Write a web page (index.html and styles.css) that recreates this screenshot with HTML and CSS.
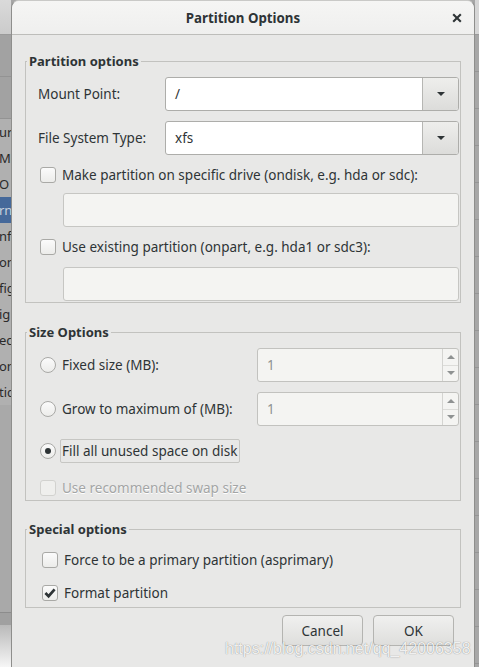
FILE: index.html
```html
<!DOCTYPE html>
<html lang="en">
<head>
<meta charset="utf-8">
<title>Partition Options</title>
<link rel="stylesheet" href="styles.css">
</head>
<body>
<div class="screen">
  <aside class="backdrop-left">
    <div class="bl-head"></div>
    <div class="bl-toolbar"></div>
    <div class="bl-toolbar"></div>
    <ul class="bl-list">
      <li>ur</li><li>Me</li><li>O</li><li class="sel">rn</li><li>nfi</li><li>on</li><li>fig</li><li>ig</li><li>ec</li><li>on</li><li>tic</li>
    </ul>
    <div class="bl-fill"></div>
    <div class="bl-band"></div>
    <div class="bl-bottom"></div>
  </aside>

  <div class="dialog">
    <header class="titlebar">
      <span></span>
      <span class="title">Partition Options</span>
      <span class="close"><svg width="10" height="10" viewBox="0 0 10 10"><path d="M1.2 1.2L8.8 8.8M8.8 1.2L1.2 8.8" stroke="#2e3436" stroke-width="2.1" stroke-linecap="butt"/></svg></span>
    </header>

    <main class="content">
      <fieldset class="frame frame-part">
        <legend>Partition options</legend>
        <div class="frame-body">
          <div class="form-row">
            <span class="label">Mount Point:</span>
            <div class="combo"><span class="combo-value">/</span><span class="combo-button"><svg width="8" height="4" viewBox="0 0 8 4"><path d="M0 0H8L4 4Z" fill="#2e3436"/></svg></span></div>
          </div>
          <div class="form-row gap10">
            <span class="label">File System Type:</span>
            <div class="combo"><span class="combo-value">xfs</span><span class="combo-button"><svg width="8" height="4" viewBox="0 0 8 4"><path d="M0 0H8L4 4Z" fill="#2e3436"/></svg></span></div>
          </div>
          <div class="check-row gap12"><span class="check"></span><span>Make partition on specific drive (ondisk, e.g. hda or sdc):</span></div>
          <div class="entry gap10"></div>
          <div class="check-row gap12"><span class="check"></span><span>Use existing partition (onpart, e.g. hda1 or sdc3):</span></div>
          <div class="entry gap12"></div>
        </div>
      </fieldset>

      <fieldset class="frame frame-size">
        <legend>Size Options</legend>
        <div class="frame-body size-body">
          <div class="size-row">
            <div class="radio-label"><span class="radio"></span><span>Fixed size (MB):</span></div>
            <div class="spin"><span class="spin-value">1</span><span class="spin-buttons"><span class="spin-btn"><svg width="8" height="4" viewBox="0 0 8 4"><path d="M0 4H8L4 0Z" fill="#8f9292"/></svg></span><span class="spin-btn"><svg width="8" height="4" viewBox="0 0 8 4"><path d="M0 0H8L4 4Z" fill="#8f9292"/></svg></span></span></div>
          </div>
          <div class="size-row gap10">
            <div class="radio-label"><span class="radio"></span><span>Grow to maximum of (MB):</span></div>
            <div class="spin"><span class="spin-value">1</span><span class="spin-buttons"><span class="spin-btn"><svg width="8" height="4" viewBox="0 0 8 4"><path d="M0 4H8L4 0Z" fill="#8f9292"/></svg></span><span class="spin-btn"><svg width="8" height="4" viewBox="0 0 8 4"><path d="M0 0H8L4 4Z" fill="#8f9292"/></svg></span></span></div>
          </div>
          <div class="fill-row gap13">
            <span class="radio checked"></span><span class="focus-label">Fill all unused space on disk</span>
          </div>
          <div class="check-row disabled gap17"><span class="check"></span><span>Use recommended swap size</span></div>
        </div>
      </fieldset>

      <fieldset class="frame frame-special">
        <legend>Special options</legend>
        <div class="frame-body special-body">
          <div class="check-row special"><span class="check"></span><span>Force to be a primary partition (asprimary)</span></div>
          <div class="check-row special gap17"><span class="check checked"><svg width="14" height="14" viewBox="0 0 14 14"><path d="M2.4 7L5.6 10.2L11.6 3.4" fill="none" stroke="#2e3436" stroke-width="2.7"/></svg></span><span>Format partition</span></div>
        </div>
      </fieldset>

      <div class="actions">
        <button class="btn">Cancel</button>
        <button class="btn">OK</button>
      </div>
    </main>

    <div class="watermark">https://blog.csdn.net/qq_42006358</div>
  </div>

  <aside class="backdrop-right">
    <div class="br-head"></div>
    <div class="br-body"></div>
  </aside>
</div>
</body>
</html>
```

FILE: styles.css
```css
* { box-sizing: border-box; }

html, body {
  margin: 0;
  padding: 0;
}

body {
  width: 479px;
  height: 667px;
  overflow: hidden;
  font-family: "Noto Sans", "DejaVu Sans", sans-serif;
  font-size: 13.5px;
  line-height: 18px;
  color: #2e3436;
  background: #a6a6a6;
}

.screen {
  display: flex;
  height: 667px;
}

/* ---------- dimmed window behind the dialog ---------- */
.backdrop-left {
  width: 11px;
  flex: none;
  display: flex;
  flex-direction: column;
  overflow: hidden;
  background: #afafaf;
}
.bl-head {
  height: 35px;
  background: linear-gradient(#dadada, #cbcbcb);
  border-bottom: 1px solid #9a9a9a;
}
.bl-toolbar {
  height: 42px;
  background: #a2a2a2;
  border-bottom: 1px solid #939393;
}
.bl-list {
  list-style: none;
  margin: 0;
  padding: 0;
  background: #b0b0b0;
}
.bl-list li {
  height: 26px;
  line-height: 26px;
  font-size: 13px;
  margin-left: -1px;
  color: #2a2a2a;
  white-space: nowrap;
}
.bl-list li.sel {
  background: #46699a;
  color: #c9d2de;
}
.bl-fill {
  flex: 1;
  background: #a9a9a9;
}
.bl-band {
  height: 13px;
  background: #a0a0a0;
  border-top: 1px solid #8c8c8c;
}
.bl-bottom {
  height: 42px;
  background: linear-gradient(#b9b9b9, #f6f6f6);
}

.backdrop-right {
  flex: 1;
  display: flex;
  flex-direction: column;
}
.br-head {
  height: 35px;
  background: #d6d6d6;
  border-bottom: 1px solid #9a9a9a;
}
.br-body {
  flex: 1;
  background: repeating-linear-gradient(#a7a7a7 0 36px, #959595 36px 37px);
}

/* ---------- dialog ---------- */
.dialog {
  width: 464px;
  flex: none;
  position: relative;
  display: flex;
  flex-direction: column;
  background: #e8e8e7;
  border: 1px solid #8e8e8c;
  border-top-color: #c9c9c7;
  border-bottom: none;
  border-radius: 8px 8px 0 0;
}

.titlebar {
  height: 34px;
  flex: none;
  display: grid;
  grid-template-columns: 1fr auto 1fr;
  align-items: center;
  background: linear-gradient(#f5f5f4, #efefee);
  border-bottom: 1px solid #bdbdba;
  border-radius: 7px 7px 0 0;
}
.title {
  font-weight: bold;
  font-size: 13.3px;
}
.close {
  justify-self: end;
  display: flex;
  margin-right: 12px;
}

.content {
  flex: 1;
  display: flex;
  flex-direction: column;
  padding: 0 13px;
}

/* ---------- frames ---------- */
.frame {
  margin: 0;
  padding: 0;
  min-width: 0;
  border: 1px solid #c2c2bf;
}
.frame legend {
  margin-left: 1px;
  padding: 0 2px;
  font-weight: bold;
  font-size: 13px;
  line-height: 18px;
}
.frame-part { margin-top: 17px; }
.frame-size { margin-top: 20px; }
.frame-special { margin-top: 19px; }

.frame-body {
  display: flex;
  flex-direction: column;
  padding: 7px 1px 1px 12px;
}
.size-body { padding-bottom: 4px; }
.special-body { padding-top: 14px; padding-bottom: 6px; }

.gap10 { margin-top: 10px; }
.gap12 { margin-top: 12px; }
.gap13 { margin-top: 13px; }
.gap17 { margin-top: 17px; }

.form-row {
  display: grid;
  grid-template-columns: 127px 1fr;
  align-items: center;
  height: 34px;
}

.combo {
  height: 34px;
  display: flex;
  background: #ffffff;
  border: 1px solid #adadaa;
  border-radius: 3px;
  overflow: hidden;
}
.combo-value {
  flex: 1;
  padding-left: 9px;
  line-height: 32px;
}
.combo-button {
  width: 36px;
  display: flex;
  align-items: center;
  justify-content: center;
  border-left: 1px solid #b6b6b3;
  background: linear-gradient(#eeeeec, #dcdcda);
}

.entry {
  height: 34px;
  margin-left: 25px;
  background: #f4f4f2;
  border: 1px solid #c6c6c3;
  border-radius: 3px;
}

/* ---------- checkbox / radio ---------- */
.check-row {
  display: flex;
  align-items: center;
  height: 16px;
  white-space: nowrap;
}
.check, .radio {
  flex: none;
  width: 16px;
  height: 16px;
  margin: 0 6px 0 2px;
  border: 1px solid #a9a9a6;
  background: linear-gradient(#fbfbfb, #ececea);
  display: flex;
  align-items: center;
  justify-content: center;
}
.check { border-radius: 3px; }
.radio { border-radius: 50%; }
.radio.checked::after {
  content: "";
  width: 6px;
  height: 6px;
  border-radius: 50%;
  background: #2e3436;
}
.check-row.special .check { margin-left: 4px; }

.check-row.disabled { color: #a3a5a5; text-shadow: 0 1px #ffffff; }
.check-row.disabled .check {
  border-color: #d2d2cf;
  background: #efefed;
}

/* ---------- size options ---------- */
.size-row {
  display: grid;
  grid-template-columns: 219px 1fr;
  align-items: center;
  height: 34px;
}
.radio-label {
  display: flex;
  align-items: center;
  white-space: nowrap;
}
.spin {
  height: 34px;
  display: flex;
  background: #f4f4f2;
  border: 1px solid #c2c2bf;
  border-radius: 3px;
  overflow: hidden;
}
.spin-value {
  flex: 1;
  padding-left: 9px;
  line-height: 32px;
  color: #8f9292;
}
.spin-buttons {
  width: 16px;
  display: flex;
  flex-direction: column;
  border-left: 1px solid #d4d4d1;
}
.spin-btn {
  flex: 1;
  display: flex;
  align-items: center;
  justify-content: center;
}
.spin-btn + .spin-btn { border-top: 1px solid #dcdcd9; }

.fill-row {
  display: flex;
  align-items: center;
  height: 24px;
}
.fill-row .radio { margin-right: 4px; }
.focus-label {
  height: 24px;
  line-height: 22px;
  padding: 0 2px 0 1px;
  border: 1px solid #c6c6c3;
  border-radius: 2px;
  white-space: nowrap;
}

/* ---------- buttons ---------- */
.actions {
  display: flex;
  justify-content: flex-end;
  gap: 10px;
  margin-top: 7px;
  padding-right: 7px;
}
.btn {
  width: 81px;
  height: 31px;
  font-family: inherit;
  font-size: 13.5px;
  color: #2e3436;
  background: linear-gradient(#f0f0ef, #dededc);
  border: 1px solid #b4b4b1;
  border-radius: 4px;
  padding: 0;
}

.watermark {
  position: absolute;
  left: 213px;
  top: 638px;
  font-family: "Liberation Sans", Arial, sans-serif;
  font-size: 16px;
  line-height: 20px;
  color: rgba(255, 255, 255, 0.9);
  text-shadow: 0 0 1px rgba(0, 0, 0, 0.5);
  white-space: nowrap;
}
```
